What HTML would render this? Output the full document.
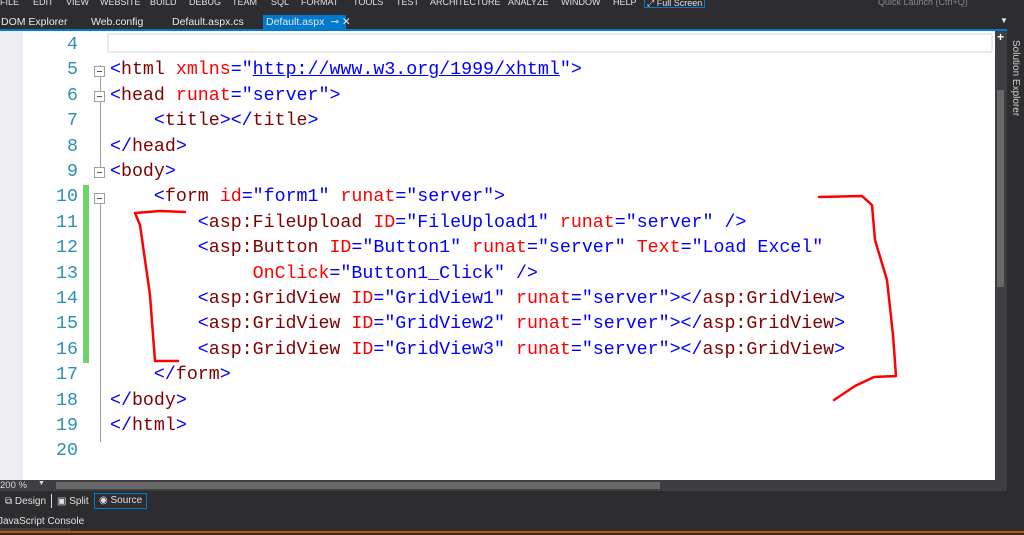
<!DOCTYPE html>
<html><head><meta charset="utf-8"><style>
*{margin:0;padding:0;box-sizing:border-box}
body{width:1024px;height:535px;overflow:hidden;background:#2d2d30;font-family:"Liberation Sans",sans-serif;position:relative}
.menu{position:absolute;top:0;left:0;width:1024px;height:10px;background:#2d2d30;color:#e0e0e0;font-size:9px;line-height:6px;overflow:hidden;white-space:nowrap}
.menu span{position:absolute;top:-1px}
.tabs{position:absolute;top:10px;left:0;width:1007px;height:20px;background:#2d2d30;color:#e8e8e8;font-size:10.5px;white-space:nowrap}
.tabs span{position:absolute;top:6px}
.tab-act{position:absolute;left:263px;top:5px;width:83px;height:15px;background:#007acc}
.blue{position:absolute;left:0;top:29px;width:1007px;height:2px;background:#007acc}
.editor{position:absolute;left:0;top:31px;width:995px;height:449px;background:#fff}
.gutter{position:absolute;left:0;top:31px;width:23px;height:449px;background:#eeeef2}
.curline{position:absolute;left:107px;top:33px;width:886px;height:20px;border:2px solid #eaeaf2}
.code{position:absolute;left:0;top:33px;font-family:"Liberation Mono",monospace;font-size:18.3px;line-height:25.4px;white-space:pre}
.ln{position:absolute;left:30px;width:48px;text-align:right;color:#2b91af}
.c{position:absolute;left:110px}
.b{color:#0000ff}.t{color:#800000}.r{color:#ff0000}.u{color:#0000ff;text-decoration:underline}
.green{position:absolute;left:83px;top:185px;width:6px;height:178px;background:#6ed36e}
.fold{position:absolute;left:100px;width:1px;background:#a0a0a0}
.box{position:absolute;left:94px;width:11px;height:11px;border:1px solid #a0a0a0;background:#fff}
.box:after{content:"";position:absolute;left:2px;top:4px;width:5px;height:1px;background:#555}
.vs{position:absolute;left:995px;top:31px;width:12px;height:449px;background:#3e3e42}
.thumb{position:absolute;left:997px;top:90px;width:7px;height:197px;background:#686868}
.side{position:absolute;left:1007px;top:30px;width:17px;height:505px;background:#2d2d30}
.hs{position:absolute;left:0;top:480px;width:1007px;height:11px;background:#3e3e42;color:#ddd;font-size:9.5px}
.bot{position:absolute;left:0;top:491px;width:1007px;height:20px;background:#2d2d30;color:#e0e0e0;font-size:10px;white-space:nowrap}
.js{position:absolute;left:0;top:511px;width:1024px;height:22px;background:#2d2d30;color:#e0e0e0;font-size:10px}
</style></head><body>
<div class="menu"><span style="left:0">FILE</span><span style="left:33px">EDIT</span><span style="left:66px">VIEW</span><span style="left:100px">WEBSITE</span><span style="left:150px">BUILD</span><span style="left:189px">DEBUG</span><span style="left:232px">TEAM</span><span style="left:271px">SQL</span><span style="left:301px">FORMAT</span><span style="left:353px">TOOLS</span><span style="left:396px">TEST</span><span style="left:430px">ARCHITECTURE</span><span style="left:508px">ANALYZE</span><span style="left:561px">WINDOW</span><span style="left:613px">HELP</span><span style="left:644px;border:1px solid #007acc;padding:0 2px;height:9px">⤢ Full Screen</span><span style="left:878px;color:#888">Quick Launch (Ctrl+Q)</span></div>
<div class="tabs"><div class="tab-act"></div><span style="left:1px">DOM Explorer</span><span style="left:91px">Web.config</span><span style="left:172px">Default.aspx.cs</span><span style="left:266px">Default.aspx &nbsp;⊸ ✕</span><span style="left:1000px;font-size:8px">▼</span></div>
<div class="blue"></div>
<div class="editor"></div><div class="gutter"></div><div class="curline"></div>
<div class="green"></div>
<div class="fold" style="top:65px;height:110px"></div>
<div class="fold" style="top:193px;height:249px"></div>
<div class="box" style="top:66px"></div><div class="box" style="top:91px"></div><div class="box" style="top:167px"></div><div class="box" style="top:193px"></div>
<div class="code">
<div class="ln" style="top:0">4</div>
<div class="ln" style="top:25.4px">5</div><div class="c" style="top:25.4px"><span class="b">&lt;</span><span class="t">html</span> <span class="r">xmlns</span><span class="b">="<span class="u">http://www.w3.org/1999/xhtml</span>"&gt;</span></div>
<div class="ln" style="top:50.8px">6</div><div class="c" style="top:50.8px"><span class="b">&lt;</span><span class="t">head</span> <span class="r">runat</span><span class="b">="server"&gt;</span></div>
<div class="ln" style="top:76.2px">7</div><div class="c" style="top:76.2px">    <span class="b">&lt;</span><span class="t">title</span><span class="b">&gt;&lt;/</span><span class="t">title</span><span class="b">&gt;</span></div>
<div class="ln" style="top:101.6px">8</div><div class="c" style="top:101.6px"><span class="b">&lt;/</span><span class="t">head</span><span class="b">&gt;</span></div>
<div class="ln" style="top:127px">9</div><div class="c" style="top:127px"><span class="b">&lt;</span><span class="t">body</span><span class="b">&gt;</span></div>
<div class="ln" style="top:152.4px">10</div><div class="c" style="top:152.4px">    <span class="b">&lt;</span><span class="t">form</span> <span class="r">id</span><span class="b">="form1"</span> <span class="r">runat</span><span class="b">="server"&gt;</span></div>
<div class="ln" style="top:177.8px">11</div><div class="c" style="top:177.8px">        <span class="b">&lt;</span><span class="t">asp:FileUpload</span> <span class="r">ID</span><span class="b">="FileUpload1"</span> <span class="r">runat</span><span class="b">="server"</span> <span class="b">/&gt;</span></div>
<div class="ln" style="top:203.2px">12</div><div class="c" style="top:203.2px">        <span class="b">&lt;</span><span class="t">asp:Button</span> <span class="r">ID</span><span class="b">="Button1"</span> <span class="r">runat</span><span class="b">="server"</span> <span class="r">Text</span><span class="b">="Load Excel"</span></div>
<div class="ln" style="top:228.6px">13</div><div class="c" style="top:228.6px">             <span class="r">OnClick</span><span class="b">="Button1_Click"</span> <span class="b">/&gt;</span></div>
<div class="ln" style="top:254px">14</div><div class="c" style="top:254px">        <span class="b">&lt;</span><span class="t">asp:GridView</span> <span class="r">ID</span><span class="b">="GridView1"</span> <span class="r">runat</span><span class="b">="server"&gt;&lt;/</span><span class="t">asp:GridView</span><span class="b">&gt;</span></div>
<div class="ln" style="top:279.4px">15</div><div class="c" style="top:279.4px">        <span class="b">&lt;</span><span class="t">asp:GridView</span> <span class="r">ID</span><span class="b">="GridView2"</span> <span class="r">runat</span><span class="b">="server"&gt;&lt;/</span><span class="t">asp:GridView</span><span class="b">&gt;</span></div>
<div class="ln" style="top:304.8px">16</div><div class="c" style="top:304.8px">        <span class="b">&lt;</span><span class="t">asp:GridView</span> <span class="r">ID</span><span class="b">="GridView3"</span> <span class="r">runat</span><span class="b">="server"&gt;&lt;/</span><span class="t">asp:GridView</span><span class="b">&gt;</span></div>
<div class="ln" style="top:330.2px">17</div><div class="c" style="top:330.2px">    <span class="b">&lt;/</span><span class="t">form</span><span class="b">&gt;</span></div>
<div class="ln" style="top:355.6px">18</div><div class="c" style="top:355.6px"><span class="b">&lt;/</span><span class="t">body</span><span class="b">&gt;</span></div>
<div class="ln" style="top:381px">19</div><div class="c" style="top:381px"><span class="b">&lt;/</span><span class="t">html</span><span class="b">&gt;</span></div>
<div class="ln" style="top:406.4px">20</div>
</div>
<svg style="position:absolute;left:0;top:0" width="1024" height="535"><g fill="none" stroke="#ff0000" stroke-width="2.5" stroke-linejoin="round" stroke-linecap="round">
<path d="M185 212 L160 211 L135 213 L140 225 L145 260 L150 295 L152 322 L155 361 L178 361"/>
<path d="M819 197 L862 196 L872 205 L875 240 L887 280 L893 335 L896 376 L874 377 L855 386 L834 400"/></g></svg>
<div class="vs"></div><div style="position:absolute;left:997px;top:33px;width:9px;height:9px;color:#fff;font-size:12px;line-height:9px;font-weight:bold">+</div><div class="thumb"></div>
<div class="side"><div style="position:absolute;left:3px;top:10px;writing-mode:vertical-rl;color:#ccc;font-size:10px">Solution Explorer</div></div>
<div class="hs"><span style="position:absolute;left:0;top:0">200 %</span><span style="position:absolute;left:38px;top:0;font-size:7px">▼</span><div style="position:absolute;left:56px;top:2px;width:604px;height:7px;background:#686868"></div></div>
<div class="bot"><span style="position:absolute;left:5px;top:5px">⧉ Design</span><span style="position:absolute;left:51px;top:3px;width:1px;height:14px;background:#ddd"></span><span style="position:absolute;left:57px;top:5px">▣ Split</span><span style="position:absolute;left:94px;top:2px;width:53px;height:16px;border:1px solid #007acc;padding:2px 4px;line-height:10px">◉ Source</span></div>
<div class="js"><span style="position:absolute;left:-2px;top:5px">JavaScript Console</span><div style="position:absolute;left:0;top:17px;width:71px;height:3px;background:#3e3e42"></div><div style="position:absolute;left:0;top:20px;width:1024px;height:2px;background:#ca5100"></div></div>
</body></html>
